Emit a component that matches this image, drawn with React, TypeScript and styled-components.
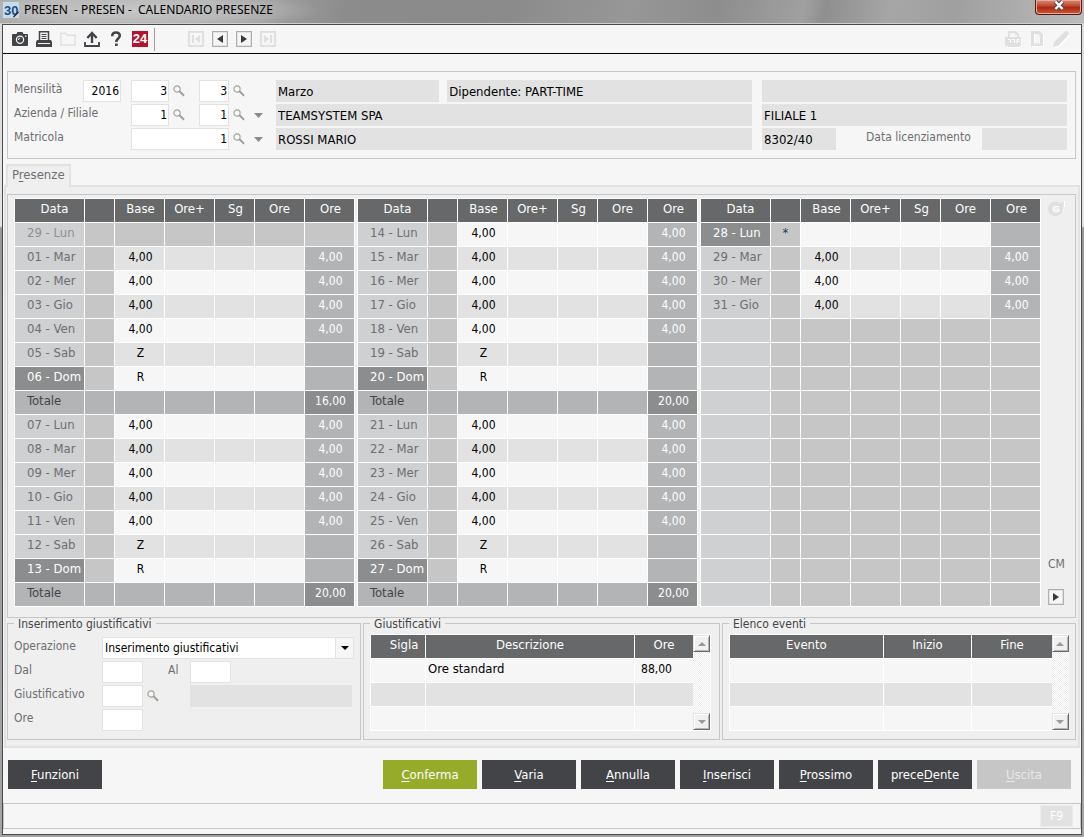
import React from "react";
import styled, { createGlobalStyle, css } from "styled-components";

const c = {
  page: "#f6f6f6",
  panel: "#efefef",
  line: "#c6c6c6",
  soft: "#e2e2e2",
  head: "#676869",
  date: "#cfd0d2",
  mid: "#b2b4b6",
  deep: "#8b8d8e",
  label: "#6d6e71",
  ink: "#434448",
  green: "#97ab2b",
};

const SMALL = "12px";

const GlobalStyle = createGlobalStyle`
  *, *::before, *::after { box-sizing: border-box; }
  body {
    margin: 0;
    background: #9a9a9a;
    font: 13px/16px "DejaVu Sans Condensed", "DejaVu Sans", sans-serif;
    color: #000;
  }
  button, input, select { font: inherit; color: inherit; margin: 0; border-radius: 0; }
  u { text-underline-offset: 2px; }
`;

/* ---------- window frame ---------- */

const Window = styled.div`
  min-height: 100vh;
  display: flex;
  flex-direction: column;
  padding: 0 2px 2px;
  background: linear-gradient(180deg, #dcdcdc 0, #e4e4e4 226px, #999 228px, #a4a4a4 100%);
`;

const TitleBar = styled.header`
  display: flex;
  align-items: flex-start;
  height: 24px;
  margin: 0 -2px;
  padding: 0 2px 0 3px;
  border-bottom: 1px solid #cfcfcf;
  background:
    radial-gradient(ellipse 190px 22px at 130px 10px, rgba(255, 255, 255, 0.4), rgba(255, 255, 255, 0.25) 60%, transparent),
    linear-gradient(100deg, #a2a2a2 0, #a0a0a0 24%, #8c8c8c 32%, #8a8a8a 46%, #979797 58%, #8d8d8d 66%, #a0a0a0 74%, #8f8f8f 76%, #a6a6a6 82%, #a0a0a0 88%, #bababa 100%);
`;

const Title = styled.h1`
  flex: 1;
  margin: 0 0 0 5px;
  font: 400 12px/20px "Noto Sans", "Open Sans", sans-serif;
  white-space: pre;
`;

const CloseButton = styled.button`
  width: 47px;
  height: 15px;
  padding: 0;
  display: flex;
  justify-content: center;
  border: 1px solid #4d1d17;
  border-top: 0;
  border-radius: 0 0 4px 4px;
  box-shadow: inset 0 0 0 1px #e9a899;
  background: linear-gradient(180deg, #d98f7d, #c04a30 40%, #a92b10 55%, #cf5a38);
`;

const Client = styled.main`
  flex: 1;
  display: flex;
  flex-direction: column;
  border: 1px solid #4a4a4a;
  background: ${c.page};
`;

/* ---------- toolbar ---------- */

const Toolbar = styled.nav`
  display: flex;
  align-items: center;
  height: 29px;
  padding: 0 8px 0 5px;
  border-bottom: 1px solid #000;
`;

const ToolButton = styled.button`
  width: 24px;
  height: 24px;
  padding: 0;
  border: 0;
  background: none;
  display: grid;
  place-items: center;
  color: ${c.ink};
  &:disabled { color: #e0e0e0; }
`;

const Divider = styled.span`
  width: 1px;
  height: 23px;
  margin: 0 33px 0 2px;
  background: #a0a0a0;
`;

const Spacer = styled.span`
  flex: 1;
`;

const Badge24 = styled.span`
  width: 16px;
  height: 16px;
  background: #b5122f;
  color: #fff;
  font: 700 13px/16px "Liberation Sans", sans-serif;
  text-align: center;
`;

const StepButton = styled.button<{ $gap?: number }>`
  width: 16px;
  height: 16px;
  margin-right: ${(p) => p.$gap ?? 0}px;
  padding: 0;
  border: 1px solid #b0b0b0;
  box-shadow: inset 0 0 0 1px ${c.soft};
  background: ${c.page};
  display: grid;
  place-items: center;
  color: #3a3a3a;
  &:disabled { color: #dedede; border-color: #dedede; }
`;

/* ---------- form parts ---------- */

const HeaderBox = styled.section`
  display: flex;
  flex-direction: column;
  gap: 2px;
  margin: 17px 5px 0 4px;
  padding: 8px;
  padding-left: 6px;
  border: 1px solid ${c.line};
`;

const Row = styled.div`
  display: flex;
  height: 22px;
`;

const Keys = styled.div`
  display: flex;
  flex: 0 0 262px;
`;

const Label = styled.label<{ $w?: number; $left?: number }>`
  flex: none;
  width: ${(p) => (p.$w ? p.$w + "px" : "auto")};
  padding-left: ${(p) => p.$left ?? 0}px;
  font-size: ${SMALL};
  line-height: 18px;
  color: ${c.label};
  white-space: nowrap;
`;

const Field = styled.input<{ $w: number; $right?: number }>`
  flex: none;
  width: ${(p) => p.$w}px;
  height: 22px;
  margin-right: ${(p) => p.$right ?? 0}px;
  padding: 0 1px;
  border: 1px solid ${c.soft};
  background: #fff;
  font-size: ${SMALL};
  text-align: right;
`;

const ReadOnly = styled.input<{ $grow?: number; $w?: number; $right?: number }>`
  flex: ${(p) => (p.$w ? `0 0 ${p.$w}px` : `${p.$grow ?? 1} 1 0`)};
  min-width: 0;
  height: 22px;
  margin-right: ${(p) => p.$right ?? 0}px;
  padding: 0 2px;
  border: 0;
  background: ${c.soft};
`;

const Group = styled.div<{ $grow: number; $gap?: number }>`
  display: flex;
  flex: ${(p) => p.$grow} 1 0;
  min-width: 0;
  gap: ${(p) => p.$gap ?? 0}px;
  & + & { margin-left: 10px; }
`;

const GlyphButton = styled.button<{ $w: number; $right?: number }>`
  flex: none;
  width: ${(p) => p.$w}px;
  height: 22px;
  margin-right: ${(p) => p.$right ?? 0}px;
  padding: 0;
  border: 0;
  background: none;
  display: grid;
  place-items: center;
`;

/* ---------- tab and panel ---------- */

const Tab = styled.button`
  align-self: flex-start;
  position: relative;
  height: 23px;
  margin: 5px 0 -2px 3px;
  padding: 0 4px 3px;
  border: 2px solid ${c.soft};
  border-bottom: 0;
  background: ${c.panel};
  color: ${c.label};
`;

const Panel = styled.section`
  margin: 0 1px;
  padding: 7px 2px 6px 1px;
  border: 2px solid ${c.soft};
  background: ${c.panel};
`;

const CalendarBox = styled.div`
  display: flex;
  gap: 2px;
  padding: 3px 10px 10px 6px;
  border: 1px solid ${c.line};
`;

const Side = styled.div`
  display: flex;
  flex-direction: column;
  align-items: flex-start;
  flex: 0 0 23px;
  padding: 3px 0 2px 5px;
  color: ${c.label};
`;

const SideCaption = styled.span`
  margin-bottom: 17px;
  font-size: ${SMALL};
`;

/* ---------- tables ---------- */

const Grid = styled.table`
  flex: 1 1 0;
  width: 0;
  min-width: 0;
  table-layout: fixed;
  border-collapse: separate;
  border-spacing: 0;
  border-right: 1px solid #fff;
  border-bottom: 1px solid #fff;
`;

const ListTable = styled(Grid)`
  border-right: 0;
`;

const cell = css`
  height: 24px;
  padding: 0 0 3px;
  border-top: 1px solid #fff;
  border-left: 1px solid #fff;
  line-height: 16px;
  font-weight: 400;
  text-align: center;
  vertical-align: middle;
  white-space: nowrap;
`;

const Th = styled.th<{ $indent?: number }>`
  ${cell}
  padding-left: ${(p) => p.$indent ?? 0}px;
  background: ${c.head};
  color: #fff;
`;

const Td = styled.td<{ $bg: string; $fg?: string; $align?: string; $indent?: number; $num?: boolean }>`
  ${cell}
  padding-left: ${(p) => p.$indent ?? 0}px;
  background: ${(p) => p.$bg};
  color: ${(p) => p.$fg ?? "#000"};
  text-align: ${(p) => p.$align ?? "center"};
  ${(p) => p.$num && `font-size: ${SMALL};`}
`;

/* ---------- lower boxes ---------- */

const Boxes = styled.div`
  display: flex;
  gap: 2px;
`;

const Box = styled.fieldset<{ $grow: number }>`
  flex: ${(p) => p.$grow} 1 0;
  min-width: 0;
  margin: 0;
  padding: 6px 8px 8px 6px;
  border: 1px solid ${c.line};
`;

const Legend = styled.legend`
  padding: 0 4px;
  height: 10px;
  font-size: ${SMALL};
  line-height: 12px;
  color: ${c.ink};
`;

const BoxForm = styled.div`
  display: flex;
  flex-direction: column;
  gap: 2px;
  padding: 3px 0 0;
  margin-right: -2px;
`;

const SelectWrap = styled.span`
  flex: 1;
  display: flex;
  position: relative;
`;

const Select = styled.select`
  flex: 1;
  min-width: 0;
  height: 22px;
  padding: 0 20px 0 2px;
  border: 1px solid ${c.soft};
  background: #fff;
  font-size: ${SMALL};
  appearance: none;
`;

const SelectArrow = styled.span`
  position: absolute;
  top: 1px;
  right: 1px;
  bottom: 1px;
  width: 18px;
  border-left: 1px solid ${c.soft};
  background: ${c.page};
  display: grid;
  place-items: center;
  pointer-events: none;
`;

const ListFrame = styled.div`
  display: flex;
  border-right: 1px solid #fff;
`;

const Scroll = styled.div`
  flex: 0 0 17px;
  display: flex;
  flex-direction: column;
  justify-content: space-between;
  border-top: 1px solid #fff;
  border-bottom: 1px solid #fff;
  background: repeating-conic-gradient(#ececec 0 25%, #fff 0 50%) 0 0 / 2px 2px;
`;

const ScrollButton = styled.button`
  width: 17px;
  height: 17px;
  padding: 0;
  border: 1px solid #e4e4e4;
  border-right-color: #6b6b6b;
  border-bottom-color: #6b6b6b;
  box-shadow: inset 1px 1px #fff, inset -1px -1px #b5b5b5;
  background: #f0f0f0;
  display: grid;
  place-items: center;
`;

/* ---------- footer ---------- */

const Actions = styled.div`
  display: flex;
  gap: 5px;
  padding: 12px 10px 14px 5px;
`;

const Action = styled.button<{ $tone?: "green" }>`
  width: 94px;
  height: 29px;
  padding: 0;
  border: 0;
  background: ${(p) => (p.$tone === "green" ? c.green : c.ink)};
  color: #fff;
  &:disabled { background: ${c.line}; color: #e8e8e8; }
`;

const Status = styled.footer`
  display: flex;
  justify-content: flex-end;
  height: 26px;
  margin-bottom: 5px;
  padding: 1px 7px;
  border: 1px solid ${c.line};
`;

const KeyHint = styled.button`
  width: 33px;
  height: 22px;
  padding: 0;
  border: 1px solid #ececec;
  background: ${c.soft};
  font-size: ${SMALL};
  &:disabled { color: #fff; }
`;

/* ---------- icons ---------- */

const Tri = ({ dir, size = 9, color = "currentColor" }: { dir: "l" | "r" | "u" | "d"; size?: number; color?: string }) => {
  const half = Math.ceil(size / 2);
  const flat = dir === "u" || dir === "d";
  const w = flat ? size : half + 2;
  const h = flat ? half : size;
  const pts = {
    l: `${w},0 0,${h / 2} ${w},${h}`,
    r: `0,0 ${w},${h / 2} 0,${h}`,
    u: `0,${h} ${w / 2},0 ${w},${h}`,
    d: `0,0 ${w / 2},${h} ${w},0`,
  }[dir];
  return (
    <svg width={w} height={h} viewBox={`0 0 ${w} ${h}`} aria-hidden="true">
      <polygon points={pts} fill={color} />
    </svg>
  );
};

const Lens = () => (
  <svg width="12" height="12" viewBox="0 0 12 12" fill="none" aria-hidden="true">
    <circle cx="4" cy="4" r="3.1" fill="#f8faf4" stroke="#a0a59c" strokeWidth="1.2" />
    <path d="M6.4 6.2 L11 10.8" stroke="#9a9a9a" strokeWidth="2" />
    <path d="M6 6.8 L10 10.8" stroke="#cfcfcf" strokeWidth=".6" />
  </svg>
);

const Camera = () => (
  <svg width="16" height="14" viewBox="0 0 16 14" aria-hidden="true">
    <path
      fill="currentColor"
      fillRule="evenodd"
      d="M5.500 0h5l1 2H15q1 0 1 1v10q0 1-1 1H1q-1 0-1-1V3q0-1 1-1h3.500zM8 3.500a4.200 4.200 0 1 0 0 8.400 4.200 4.200 0 0 0 0-8.400zM13 3.500v1.300h1.500V3.500z"
    />
    <circle cx="8" cy="7.700" r="3" fill="currentColor" />
    <path d="M6.300 8a1.800 1.800 0 0 1 1.800-1.800" stroke="#f6f6f6" fill="none" />
  </svg>
);

const Printer = () => (
  <svg width="16" height="16" viewBox="0 0 16 16" fill="none" aria-hidden="true">
    <path d="M3.500 10V.8h9V10" stroke="currentColor" strokeWidth="1.500" />
    <path d="M5.500 3.500h5M5.500 5.500h5M5.500 7.500h5" stroke="currentColor" />
    <path fill="currentColor" d="M1 9h14l1 2v5H0v-5z" />
    <path d="M2 12.500h12" stroke="#f6f6f6" />
  </svg>
);

const Folder = () => (
  <svg width="16" height="14" viewBox="0 0 16 14" fill="none" aria-hidden="true">
    <path d="M.8 13V1.200h5l1.500 2h7.900V13z" stroke="currentColor" strokeWidth="1.400" />
  </svg>
);

const Upload = () => (
  <svg width="16" height="16" viewBox="0 0 16 16" fill="none" aria-hidden="true">
    <path d="M8 12V2M3.300 7L8 2l4.700 5" stroke="currentColor" strokeWidth="2.400" />
    <path d="M1 11v4h14v-4" stroke="currentColor" strokeWidth="1.800" />
  </svg>
);

const Help = () => (
  <svg width="12" height="16" viewBox="0 0 12 16" fill="none" aria-hidden="true">
    <path d="M2.200 5.200C2.200 2.600 3.800 1.500 6 1.500s3.800 1.200 3.800 3.300C9.800 7.600 6.300 7.400 6.300 11" stroke="currentColor" strokeWidth="2.500" />
    <path fill="currentColor" d="M5 12.500h2.700v2.500H5z" />
  </svg>
);

const PdfPrinter = () => (
  <svg width="17" height="17" viewBox="0 0 17 17" aria-hidden="true">
    <path fill="currentColor" fillRule="evenodd" d="M3 0h8l3 3v3h2v9h-2v1H3v-1H0V6h3zM5 2v4h7V4h-2V2z" />
    <path d="M3 8.500h2.500v3M7 8.500h2.500v3M14.500 8.500H12v4M12 10.500h2.500M2 16.500h13v-1h2V7" stroke="#fff" fill="none" />
  </svg>
);

const Page = () => (
  <svg width="13" height="16" viewBox="0 0 13 16" fill="none" aria-hidden="true">
    <path d="M1.500 1.500h6.500l2.500 2.500v10h-9z" stroke="currentColor" strokeWidth="3" />
    <path d="M12.500 4v11.500H1M3.500 3v9" stroke="#fff" />
  </svg>
);

const Pencil = () => (
  <svg width="17" height="17" viewBox="0 0 17 17" fill="none" aria-hidden="true">
    <path d="M1.500 16.500L6 15.500 16.500 4.500" stroke="#fff" strokeWidth="1.500" />
    <path fill="currentColor" d="M0 16l1-5L12 .5q1.500-1 3 .4t.4 3L5 15z" />
  </svg>
);

const Refresh = () => (
  <svg width="17" height="16" viewBox="0 0 17 16" fill="none" aria-hidden="true">
    <path d="M16.500 0v5.500h-2.500M15 8q0 3-2.500 5l-2 2H5l-2-2" stroke="#fff" strokeWidth="1.200" />
    <circle cx="7.500" cy="8" r="5.500" stroke="#e0e0e0" strokeWidth="4" />
    <path d="M15.500 0v6h-6z" fill="#e0e0e0" />
    <path d="M11 5.500H8a2.500 2.500 0 0 0 0 5h3V8.500H9" stroke="#fff" />
  </svg>
);

const Logo = () => (
  <svg width="16" height="18" viewBox="0 0 16 18" aria-hidden="true">
    <rect y="2" width="16" height="16" fill="#c3dcf0" />
    <text x="1" y="15" fontFamily="Liberation Sans, sans-serif" fontWeight="700" fontSize="13" fill="#1d4f86">30</text>
    <path d="M10.500 17l5-5" stroke="#222" strokeWidth="1.200" />
  </svg>
);

const CloseGlyph = () => (
  <svg width="14" height="12" viewBox="0 0 14 12" aria-hidden="true">
    <path d="M3.500 1.500l7 7.500M10.500 1.500l-7 7.500" stroke="#4a4a55" strokeWidth="4.500" />
    <path d="M3.500 1.500l7 7.500M10.500 1.500l-7 7.500" stroke="#fff" strokeWidth="2.500" />
  </svg>
);

const SkipGlyph = ({ end }: { end?: boolean }) => (
  <svg width="10" height="10" viewBox="0 0 10 10" aria-hidden="true">
    {end ? (
      <path d="M1 1l5 4-5 4zM7 1h2v8H7z" fill="currentColor" />
    ) : (
      <path d="M9 1L4 5l5 4zM1 1h2v8H1z" fill="currentColor" />
    )}
  </svg>
);

/* ---------- calendar ---------- */

type Day = { d?: string; base?: string; ore?: string; kind?: "off" | "holiday" | "total" | "blank"; mark?: string };

const WEEK = ["Lun", "Mar", "Mer", "Gio", "Ven", "Sab", "Dom"];

const week = (first: number, skip = 0): Day[] =>
  WEEK.slice(skip).map((name, i) => {
    const d = `${String(first + i).padStart(2, "0")} - ${name}`;
    if (name === "Sab") return { d, base: "Z" };
    if (name === "Dom") return { d, base: "R", kind: "holiday" };
    return { d, base: "4,00", ore: "4,00" };
  });

const total = (ore: string): Day => ({ d: "Totale", ore, kind: "total" });

const MONTH: Day[][] = [
  [{ d: "29 - Lun", kind: "off" }, ...week(1, 1), total("16,00"), ...week(7), total("20,00")],
  [...week(14), total("20,00"), ...week(21), total("20,00")],
  [
    { d: "28 - Lun", kind: "holiday", mark: "*" },
    ...week(29, 1).slice(0, 3),
    ...Array.from({ length: 12 }, (): Day => ({ kind: "blank" })),
  ],
];

const COLS = [
  { head: "Data", width: 70, indent: 10 },
  { head: "", width: 30, indent: 0 },
  { head: "Base", width: 50, indent: 2 },
  { head: "Ore+", width: 50, indent: 0 },
  { head: "Sg", width: 40, indent: 2 },
  { head: "Ore", width: 50, indent: 0 },
  { head: "Ore", width: 50, indent: 2 },
];

const DayRow = ({ day, odd }: { day: Day; odd: boolean }) => {
  const { kind } = day;
  const isTotal = kind === "total";
  const empty = kind === "off" || kind === "blank";
  const body = isTotal ? c.mid : empty ? c.line : odd ? c.soft : c.page;
  const dateBg = isTotal ? c.mid : kind === "holiday" ? c.deep : c.date;
  const dateFg = isTotal ? c.ink : kind === "holiday" ? "#fff" : kind === "off" ? "#8e8f91" : c.label;
  return (
    <tr>
      <Td $bg={dateBg} $fg={dateFg} $align="left" $indent={12}>{day.d}</Td>
      <Td $bg={isTotal ? c.mid : c.line} $fg="#1f3a5f">{day.mark}</Td>
      <Td $bg={body} $indent={2} $num>{day.base}</Td>
      <Td $bg={body} />
      <Td $bg={body} />
      <Td $bg={body} />
      <Td $bg={isTotal ? c.deep : empty ? c.line : c.mid} $fg="#fff" $indent={2} $num>{day.ore}</Td>
    </tr>
  );
};

const Calendar = ({ days }: { days: Day[] }) => (
  <Grid>
    <colgroup>{COLS.map((col, i) => <col key={i} width={col.width} />)}</colgroup>
    <thead>
      <tr>{COLS.map((col, i) => <Th key={i} $indent={col.indent}>{col.head}</Th>)}</tr>
    </thead>
    <tbody>{days.map((day, i) => <DayRow key={i} day={day} odd={i % 2 === 1} />)}</tbody>
  </Grid>
);

const List = ({ cols, heads, rows }: { cols: number[]; heads: string[]; rows: string[][] }) => (
  <ListFrame>
    <ListTable>
      <colgroup>{cols.map((w, i) => <col key={i} width={w} />)}</colgroup>
      <thead>
        <tr>{heads.map((h) => <Th key={h} $indent={h === "Sigla" ? 12 : 0}>{h}</Th>)}</tr>
      </thead>
      <tbody>
        {rows.map((r, i) => (
          <tr key={i}>
            {r.map((t, j) => (
              <Td key={j} $bg={i % 2 ? c.soft : c.page} $align="left" $indent={j === 2 ? 6 : 2} $num={j === 2}>{t}</Td>
            ))}
          </tr>
        ))}
      </tbody>
    </ListTable>
    <Scroll>
      <ScrollButton aria-label="Scorri su"><Tri dir="u" size={8} color="#999" /></ScrollButton>
      <ScrollButton aria-label="Scorri giù"><Tri dir="d" size={8} color="#999" /></ScrollButton>
    </Scroll>
  </ListFrame>
);

const Search = ({ right }: { right?: number }) => (
  <GlyphButton aria-label="Cerca" $w={20} $right={right}><Lens /></GlyphButton>
);

const More = () => (
  <GlyphButton aria-label="Elenco" $w={18}><Tri dir="d" size={9} color="#8a8a8a" /></GlyphButton>
);

export default function App() {
  return (
    <>
      <GlobalStyle />
      <Window>
        <TitleBar>
          <Logo />
          <Title>PRESEN  - PRESEN -  CALENDARIO PRESENZE</Title>
          <CloseButton aria-label="Chiudi"><CloseGlyph /></CloseButton>
        </TitleBar>
        <Client>
          <Toolbar>
            <ToolButton aria-label="Cattura"><Camera /></ToolButton>
            <ToolButton aria-label="Stampa"><Printer /></ToolButton>
            <ToolButton aria-label="Apri" disabled><Folder /></ToolButton>
            <ToolButton aria-label="Esporta"><Upload /></ToolButton>
            <ToolButton aria-label="Aiuto"><Help /></ToolButton>
            <ToolButton><Badge24>24</Badge24></ToolButton>
            <Divider />
            <StepButton aria-label="Primo" $gap={8} disabled><SkipGlyph /></StepButton>
            <StepButton aria-label="Indietro" $gap={8}><Tri dir="l" size={8} /></StepButton>
            <StepButton aria-label="Avanti" $gap={8}><Tri dir="r" size={8} /></StepButton>
            <StepButton aria-label="Ultimo" disabled><SkipGlyph end /></StepButton>
            <Spacer />
            <ToolButton aria-label="Stampa PDF" disabled><PdfPrinter /></ToolButton>
            <ToolButton aria-label="Nuovo" disabled><Page /></ToolButton>
            <ToolButton aria-label="Modifica" disabled><Pencil /></ToolButton>
          </Toolbar>

          <HeaderBox>
            <Row>
              <Keys>
                <Label htmlFor="anno" $w={69}>Mensilità</Label>
                <Field id="anno" $w={38} $right={10} defaultValue="2016" />
                <Field aria-label="Mese da" $w={38} defaultValue="3" />
                <Search right={10} />
                <Field aria-label="Mese a" $w={30} defaultValue="3" />
                <Search />
              </Keys>
              <Group $grow={476} $gap={8}>
                <ReadOnly aria-label="Mese" $grow={162} readOnly defaultValue="Marzo" />
                <ReadOnly aria-label="Dipendente" $grow={306} readOnly defaultValue="Dipendente: PART-TIME" />
              </Group>
              <Group $grow={305}>
                <ReadOnly aria-label="Note" readOnly />
              </Group>
            </Row>
            <Row>
              <Keys>
                <Label htmlFor="azienda" $w={117}>Azienda / Filiale</Label>
                <Field id="azienda" $w={38} defaultValue="1" />
                <Search right={10} />
                <Field aria-label="Filiale" $w={30} defaultValue="1" />
                <Search />
                <More />
              </Keys>
              <Group $grow={476}>
                <ReadOnly aria-label="Ragione sociale" readOnly defaultValue="TEAMSYSTEM SPA" />
              </Group>
              <Group $grow={305}>
                <ReadOnly aria-label="Nome filiale" readOnly defaultValue="FILIALE 1" />
              </Group>
            </Row>
            <Row>
              <Keys>
                <Label htmlFor="matricola" $w={117}>Matricola</Label>
                <Field id="matricola" $w={98} defaultValue="1" />
                <Search />
                <More />
              </Keys>
              <Group $grow={476}>
                <ReadOnly aria-label="Nominativo" readOnly defaultValue="ROSSI MARIO" />
              </Group>
              <Group $grow={305}>
                <ReadOnly aria-label="Codice" $w={74} readOnly defaultValue="8302/40" />
                <Label htmlFor="licenziamento" $w={146} $left={30}>Data licenziamento</Label>
                <ReadOnly id="licenziamento" readOnly />
              </Group>
            </Row>
          </HeaderBox>

          <Tab>P<u>r</u>esenze</Tab>
          <Panel>
            <CalendarBox>
              {MONTH.map((days, i) => <Calendar key={i} days={days} />)}
              <Side>
                <Refresh />
                <Spacer />
                <SideCaption>CM</SideCaption>
                <StepButton aria-label="Pagina successiva"><Tri dir="r" size={8} /></StepButton>
              </Side>
            </CalendarBox>

            <Boxes>
              <Box $grow={354}>
                <Legend>Inserimento giustificativi</Legend>
                <BoxForm>
                  <Row>
                    <Label htmlFor="operazione" $w={88}>Operazione</Label>
                    <SelectWrap>
                      <Select id="operazione"><option>Inserimento giustificativi</option></Select>
                      <SelectArrow><Tri dir="d" size={8} /></SelectArrow>
                    </SelectWrap>
                  </Row>
                  <Row>
                    <Label htmlFor="dal" $w={88}>Dal</Label>
                    <Field id="dal" $w={41} />
                    <Label htmlFor="al" $w={47} $left={25}>Al</Label>
                    <Field id="al" $w={41} />
                  </Row>
                  <Row>
                    <Label htmlFor="giustificativo" $w={88}>Giustificativo</Label>
                    <Field id="giustificativo" $w={41} />
                    <Search right={27} />
                    <ReadOnly aria-label="Descrizione giustificativo" $right={2} readOnly />
                  </Row>
                  <Row>
                    <Label htmlFor="ore" $w={88}>Ore</Label>
                    <Field id="ore" $w={41} />
                  </Row>
                </BoxForm>
              </Box>
              <Box $grow={357}>
                <Legend>Giustificativi</Legend>
                <List
                  cols={[55, 209, 59]}
                  heads={["Sigla", "Descrizione", "Ore"]}
                  rows={[["", "Ore standard", "88,00"], ["", "", ""], ["", "", ""]]}
                />
              </Box>
              <Box $grow={354}>
                <Legend>Elenco eventi</Legend>
                <List
                  cols={[154, 88, 81]}
                  heads={["Evento", "Inizio", "Fine"]}
                  rows={[["", "", ""], ["", "", ""], ["", "", ""]]}
                />
              </Box>
            </Boxes>
          </Panel>

          <Actions>
            <Action><u>F</u>unzioni</Action>
            <Spacer />
            <Action $tone="green"><u>C</u>onferma</Action>
            <Action><u>V</u>aria</Action>
            <Action><u>A</u>nnulla</Action>
            <Action><u>I</u>nserisci</Action>
            <Action><u>P</u>rossimo</Action>
            <Action>prece<u>D</u>ente</Action>
            <Action disabled><u>U</u>scita</Action>
          </Actions>
          <Status><KeyHint disabled>F9</KeyHint></Status>
        </Client>
      </Window>
    </>
  );
}
